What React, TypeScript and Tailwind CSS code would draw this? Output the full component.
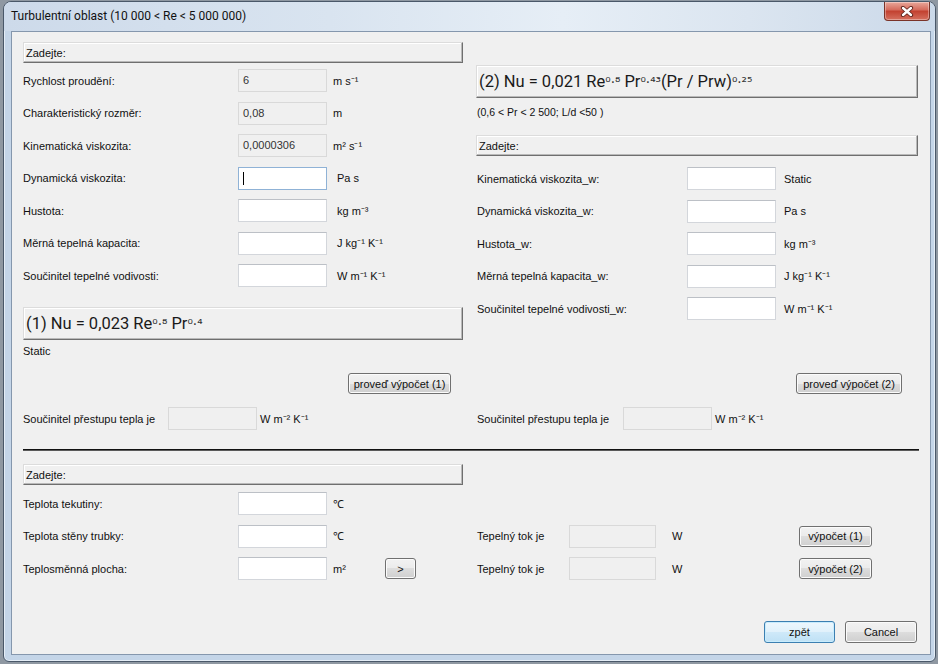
import React from 'react'

/* Win7-style dialog: "Turbulentní oblast" */

const raised =
  'border border-t-[#dcdcdc] border-l-[#dcdcdc] border-r-[#6f6f6f] border-b-[#6f6f6f] shadow-[inset_-1px_-1px_0_#b9b9b9,inset_1px_1px_0_#ffffff] bg-[#f0f0f0]'

const btn =
  'flex items-center justify-center rounded-[3px] border border-[#707070] bg-[linear-gradient(#f2f2f2,#ebebeb_50%,#dddddd_50%,#cfcfcf)] shadow-[inset_0_0_0_1px_#fbfbfb] text-[11px] text-[#111]'

function Field({ w = 89, value, disabled, focused }: { w?: number; value?: string; disabled?: boolean; focused?: boolean }) {
  const base = disabled
    ? 'bg-[#f0f0f0] border-[#d9d9d9]'
    : focused
      ? 'bg-white border-[#8fb2d6]'
      : 'bg-white border-[#d3d6db] border-t-[#bcc0c6]'
  return (
    <div className={`h-[23px] shrink-0 border ${base} flex items-start pl-[4px] pt-[3px] text-[11px] leading-[14px] text-[#333]`} style={{ width: w }}>
      {value}
      {focused && <span className="mt-[1px] h-[13px] w-[1px] bg-black" />}
    </div>
  )
}

function Bar({ children, h = 21, className = '' }: { children: React.ReactNode; h?: number; className?: string }) {
  return (
    <div className={`${raised} flex items-center pl-[2px] ${className}`} style={{ height: h }}>
      {children}
    </div>
  )
}

function Sup({ children }: { children: React.ReactNode }) {
  return <span className="font-['DejaVu_Sans',sans-serif] text-[13.5px] text-[#333]">{children}</span>
}

type Row = { label: string; unit: string; value?: string; disabled?: boolean; focused?: boolean; wide?: boolean }

const leftRows: Row[] = [
  { label: 'Rychlost proudění:', value: '6', disabled: true, unit: 'm s⁻¹' },
  { label: 'Charakteristický rozměr:', value: '0,08', disabled: true, unit: 'm' },
  { label: 'Kinematická viskozita:', value: '0,0000306', disabled: true, unit: 'm² s⁻¹' },
  { label: 'Dynamická viskozita:', focused: true, unit: 'Pa s', wide: true },
  { label: 'Hustota:', unit: 'kg m⁻³', wide: true },
  { label: 'Měrná tepelná kapacita:', unit: 'J kg⁻¹ K⁻¹', wide: true },
  { label: 'Součinitel tepelné vodivosti:', unit: 'W m⁻¹ K⁻¹', wide: true },
]

const rightRows: Row[] = [
  { label: 'Kinematická viskozita_w:', unit: 'Static' },
  { label: 'Dynamická viskozita_w:', unit: 'Pa s' },
  { label: 'Hustota_w:', unit: 'kg m⁻³' },
  { label: 'Měrná tepelná kapacita_w:', unit: 'J kg⁻¹ K⁻¹' },
  { label: 'Součinitel tepelné vodivosti_w:', unit: 'W m⁻¹ K⁻¹' },
]

function CloseIcon() {
  return (
    <svg width="14" height="11" viewBox="0 0 14 11">
      <path d="M3 2 L11 9 M11 2 L3 9" stroke="#5e231b" strokeWidth="4.2" strokeLinecap="round" />
      <path d="M3 2 L11 9 M11 2 L3 9" stroke="#ffffff" strokeWidth="2.4" strokeLinecap="round" />
    </svg>
  )
}

export default function App() {
  return (
    <div className="h-[664px] w-[938px] overflow-hidden bg-[#8f98a2] pl-[3px] pt-[1px] font-['Liberation_Sans',Arial,sans-serif]">
      <div className="flex h-[661px] w-[933px] flex-col rounded-t-[8px] rounded-b-[6px] border border-[#4a5869] bg-[#c4d5e8] shadow-[inset_0_0_0_1px_#e4edf6]">
        {/* Title bar */}
        <div className="flex h-[29px] shrink-0 items-start justify-between rounded-t-[7px] bg-[linear-gradient(90deg,#cddaea_0%,#d9e4f0_35%,#e6eef6_60%,#dbe5f0_80%,#cbd9e9_100%)] pl-[7px] pr-[5px]">
          <div className="pt-[7px] font-['Roboto',sans-serif] text-[12px] leading-[15px] text-[#111]">
            Turbulentní oblast (10 000 &lt; Re &lt; 5 000 000)
          </div>
          <div className="flex h-[19px] w-[46px] items-center justify-center rounded-b-[4px] border border-t-0 border-[#7a3328] bg-[linear-gradient(#e9a89b,#d4695a_45%,#c2402f_50%,#d5705f)] shadow-[inset_0_0_0_1px_rgba(255,255,255,0.35)]">
            <CloseIcon />
          </div>
        </div>

        {/* Client area */}
        <div className="mb-[6px] ml-[7px] mr-[4px] flex flex-1 flex-col border border-[#8597ad] bg-[#f0f0f0] pl-[11px] pr-[11px] pt-[10px] text-[11px] leading-[14px] text-[#111]">
          {/* Section A */}
          <div className="flex items-start gap-[13px]">
            <div className="flex w-[440px] flex-col">
              <Bar>Zadejte:</Bar>
              <div className="mt-[6px] flex flex-col gap-[9.5px]">
                {leftRows.map(r => (
                  <div key={r.label} className="flex h-[23px] items-center">
                    <span className="w-[215px]">{r.label}</span>
                    <Field value={r.value} disabled={r.disabled} focused={r.focused} />
                    <span className={r.wide ? 'ml-[10px]' : 'ml-[6px]'}>{r.unit}</span>
                  </div>
                ))}
              </div>
              <Bar h={33} className="mt-[20px] font-['Roboto',sans-serif] text-[16.5px] text-[#1a1a1a] whitespace-pre">
                (1) Nu = 0,023 Re<Sup>⁰·⁸</Sup> Pr<Sup>⁰·⁴</Sup>
              </Bar>
              <div className="mt-[4px] h-[14px]">Static</div>
            </div>

            <div className="flex w-[442px] flex-col">
              <Bar h={33} className="mt-[23px] font-['Roboto',sans-serif] text-[16.5px] text-[#1a1a1a] whitespace-pre">
                (2) Nu = 0,021 Re<Sup>⁰·⁸</Sup> Pr<Sup>⁰·⁴³</Sup>(Pr / Prw)<Sup>⁰·²⁵</Sup>
              </Bar>
              <div className="mt-[7px] h-[14px] pl-[1px] text-[10.5px]">(0,6 &lt; Pr &lt; 2 500; L/d &lt;50 )</div>
              <Bar className="mt-[16px]">Zadejte:</Bar>
              <div className="mt-[11px] flex flex-col gap-[9.5px]">
                {rightRows.map(r => (
                  <div key={r.label} className="flex h-[23px] items-center pl-[1px]">
                    <span className="w-[210px]">{r.label}</span>
                    <Field />
                    <span className="ml-[8px]">{r.unit}</span>
                  </div>
                ))}
              </div>
            </div>
          </div>

          {/* Section B: compute buttons + results */}
          <div className="mt-[15px] flex gap-[13px]">
            <div className="flex w-[440px] flex-col">
              <div className="flex justify-end pr-[12px]">
                <div className={`${btn} h-[21px] w-[103px]`}>proveď výpočet (1)</div>
              </div>
              <div className="mt-[13px] flex h-[23px] items-center">
                <span className="w-[145px]">Součinitel přestupu tepla je</span>
                <Field disabled />
                <span className="ml-[3px]">W m⁻² K⁻¹</span>
              </div>
            </div>
            <div className="flex w-[442px] flex-col">
              <div className="flex justify-end pr-[16px]">
                <div className={`${btn} h-[21px] w-[106px]`}>proveď výpočet (2)</div>
              </div>
              <div className="mt-[13px] flex h-[23px] items-center pl-[1px]">
                <span className="w-[146px]">Součinitel přestupu tepla je</span>
                <Field disabled />
                <span className="ml-[3px]">W m⁻² K⁻¹</span>
              </div>
            </div>
          </div>

          {/* Separator */}
          <div className="mt-[19px] h-[2px] border-t border-b border-t-[#111] border-b-[#5a5a5a]" />

          {/* Bottom section */}
          <div className="mt-[13px] flex gap-[13px]">
            <div className="w-[440px]">
              <Bar>Zadejte:</Bar>
            </div>
          </div>
          <div className="mt-[7px] flex flex-col gap-[9.5px]">
            <div className="flex h-[23px] items-center">
              <span className="w-[215px]">Teplota tekutiny:</span>
              <Field />
              <span className="ml-[6px]">℃</span>
            </div>
            <div className="flex h-[23px] items-center">
              <div className="flex w-[440px] items-center">
                <span className="w-[215px]">Teplota stěny trubky:</span>
                <Field />
                <span className="ml-[6px]">℃</span>
              </div>
              <div className="ml-[13px] flex items-center pl-[1px]">
                <span className="w-[92px]">Tepelný tok je</span>
                <Field w={87} disabled />
                <span className="ml-[16px] w-[127px]">W</span>
                <div className={`${btn} h-[21px] w-[73px]`}>výpočet (1)</div>
              </div>
            </div>
            <div className="flex h-[23px] items-center">
              <div className="flex w-[440px] items-center">
                <span className="w-[215px]">Teplosměnná plocha:</span>
                <Field />
                <span className="ml-[6px] w-[52px]">m²</span>
                <div className={`${btn} h-[21px] w-[31px]`}>&gt;</div>
              </div>
              <div className="ml-[13px] flex items-center pl-[1px]">
                <span className="w-[92px]">Tepelný tok je</span>
                <Field w={87} disabled />
                <span className="ml-[16px] w-[127px]">W</span>
                <div className={`${btn} h-[21px] w-[73px]`}>výpočet (2)</div>
              </div>
            </div>
          </div>

          {/* Dialog buttons */}
          <div className="mt-auto flex justify-end gap-[10px] pb-[11px] pr-[2px]">
            <div className="flex h-[22px] w-[71px] items-center justify-center rounded-[3px] border border-[#3c7fb1] bg-[linear-gradient(#eef7fd,#e0f1fb_50%,#cfe9f9_50%,#bfe1f5)] shadow-[inset_0_0_0_1px_#c8ecfd] text-[11px]">
              zpět
            </div>
            <div className={`${btn} h-[22px] w-[72px]`}>Cancel</div>
          </div>
        </div>
      </div>
    </div>
  )
}
